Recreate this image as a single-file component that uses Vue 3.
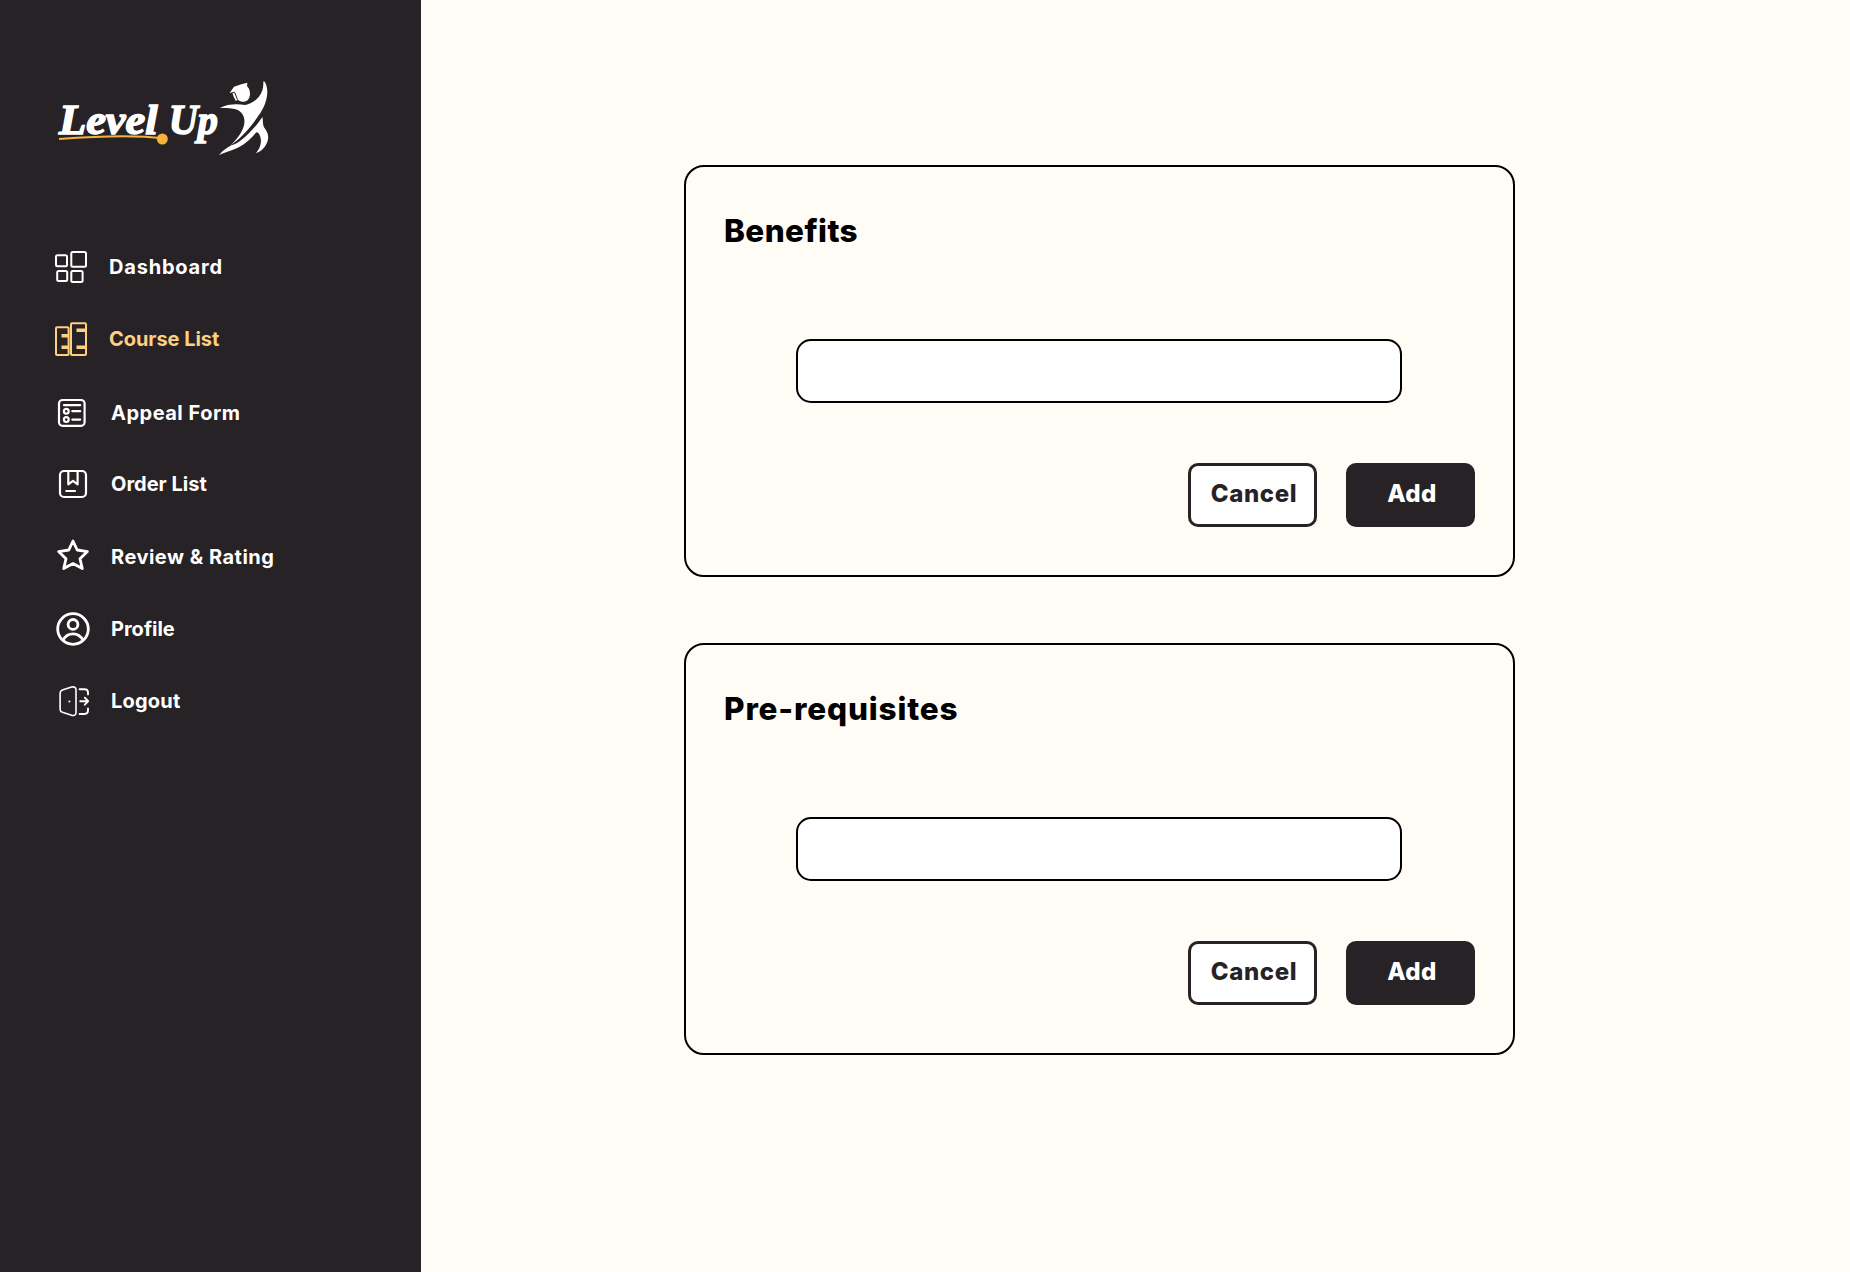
<script setup>
const menu = [
  { id: 'dashboard', label: 'Dashboard' },
  { id: 'courses', label: 'Course List', active: true },
  { id: 'appeal', label: 'Appeal Form' },
  { id: 'orders', label: 'Order List' },
  { id: 'review', label: 'Review & Rating' },
  { id: 'profile', label: 'Profile' },
  { id: 'logout', label: 'Logout' },
]

const sections = [
  { id: 'benefits', title: 'Benefits' },
  { id: 'prerequisites', title: 'Pre-requisites' },
]
</script>

<template>
  <div class="page">
    <aside class="sidebar">
      <svg class="logo" viewBox="0 0 750 360" role="img" aria-label="Level Up">
        <g class="wordmark">
          <text x="57" y="223" textLength="296" lengthAdjust="spacingAndGlyphs">Level</text>
          <text x="386" y="223" textLength="148" lengthAdjust="spacingAndGlyphs">Up</text>
        </g>
        <path class="swoosh" d="M57 237C150 230 270 222 367 235" />
        <circle class="ball" cx="367" cy="237" r="16.5" />
        <g class="figure">
          <path d="M569 99L582 80L604 73L622 68L621 78L627 86C632 98 631 111 624 119C616 127 600 128 592 118L588 124L581 110L577 99Z" />
          <path d="M540 144C562 132 590 131 615 135C640 131 660 113 667 91C671 80 669 70 671 62C682 72 684 94 680 113C675 138 664 155 652 172C640 189 630 202 620 213C605 230 590 243 572 256C588 240 606 220 612 196C618 167 603 149 580 146C564 144 552 145 540 144Z" />
          <path d="M537 285C551 270 562 262 574 256C596 250 614 232 628 218C644 202 656 188 667 171C670 181 667 192 672 202C683 216 688 229 682 245C676 262 663 275 648 279C661 263 667 245 660 228C657 219 653 217 649 217C634 235 616 251 596 262C576 273 557 276 537 285Z" />
          <path class="tassel" d="M573 99L584 97L592 118" />
        </g>
      </svg>

      <nav class="menu">
        <a v-for="item in menu" :key="item.id" :class="['item', item.id, { active: item.active }]">
          <svg class="icon" viewBox="0 0 40 40">
            <g v-if="item.id === 'dashboard'" stroke-width="2">
              <rect x="4" y="8.2" width="11" height="11" rx="1.5" />
              <rect x="19.3" y="5" width="14.7" height="14.7" rx="1.5" />
              <rect x="5.2" y="24" width="10" height="10" rx="1.5" />
              <rect x="19.3" y="24" width="11.3" height="11" rx="1.5" />
            </g>
            <g v-else-if="item.id === 'courses'" stroke-width="2">
              <rect x="4" y="8.2" width="12.6" height="27.8" rx="1" />
              <rect x="19" y="4.2" width="15" height="31.8" rx="1" />
              <path stroke-width="3.4" d="M9.5 16.8H16M9.5 28.2H16M24.5 11.3H34M24.5 28.2H34" />
            </g>
            <g v-else-if="item.id === 'appeal'" stroke-width="2.2">
              <rect x="7" y="7" width="25.6" height="25.8" rx="3.6" />
              <path stroke-linecap="round" d="M12 12.2H28.2M20.3 18.2H28.2M20.3 26.6H28.2" />
              <circle cx="14.3" cy="18.2" r="2.4" />
              <circle cx="14.3" cy="26.6" r="2.4" />
            </g>
            <g v-else-if="item.id === 'orders'" stroke-width="2.2" stroke-linecap="round" stroke-linejoin="round">
              <rect x="8" y="7" width="26" height="26" rx="4" />
              <path d="M16.3 7V20.3L21 16.8L25.6 20.3V7M14.3 27H23" />
            </g>
            <g v-else-if="item.id === 'review'" stroke-width="2.8" stroke-linejoin="round">
              <path d="M21 4L25.2 13L35.4 14.6L28 21.7L30.3 31.6L21 26.6L11.7 31.6L14 21.7L6.6 14.6L16.8 13Z" />
            </g>
            <g v-else-if="item.id === 'profile'" stroke-width="2.8">
              <circle cx="21" cy="20" r="15.3" />
              <circle cx="21" cy="15.4" r="4.9" />
              <path d="M10.8 31.4C15.5 22.6 26.5 22.6 31.2 31.4" />
            </g>
            <g v-else stroke-width="1.9" stroke-linecap="round" stroke-linejoin="round">
              <path stroke-width="1.6" d="M8.1 12.2C8.1 10.6 8.8 9.7 10.4 9.1L19.6 6.1C22 5.3 24 6.4 24 8.8V31.6C24 34 22 35.1 19.6 34.3L10.4 31.3C8.8 30.7 8.1 29.8 8.1 28.2Z" />
              <path d="M27.6 8.2H32.4C34.8 8.2 36 9.3 36 11.6V13.4M27.6 33H32.4C34.8 33 36 31.9 36 29.6V27.4M28.2 20.2H35.8M32.8 16.7L36.2 20.2L32.8 23.7" />
              <circle class="knob" cx="17.4" cy="20.4" r="1" />
            </g>
          </svg>
          <span class="label">{{ item.label }}</span>
        </a>
      </nav>
    </aside>

    <main class="content">
      <section v-for="section in sections" :key="section.id" class="card">
        <h2 :class="['title', section.id]">{{ section.title }}</h2>
        <input class="field" type="text" :aria-label="section.title" />
        <div class="actions">
          <button class="btn cancel" type="button">Cancel</button>
          <button class="btn add" type="button">Add</button>
        </div>
      </section>
    </main>
  </div>
</template>

<style>
body {
  margin: 0;
}
</style>

<style scoped>
.page {
  display: flex;
  min-height: 1272px;
  height: 100vh;
  background: #fffbf5;
  font-family: Inter, 'Liberation Sans', sans-serif;
}

.sidebar {
  box-sizing: border-box;
  width: 421px;
  flex: none;
  padding-top: 60px;
  background: #272226;
  color: #fff;
}

.logo {
  display: block;
  width: 250px;
  height: 120px;
  margin-left: 40px;
}

.wordmark {
  font: italic 700 128px 'Liberation Serif', serif;
  fill: #fff;
  stroke: #fff;
  stroke-width: 4.5;
}

.swoosh {
  fill: none;
  stroke: #f6b23d;
  stroke-width: 6;
}

.ball {
  fill: #f6b23d;
}

.figure {
  fill: #fff;
}

.tassel {
  fill: none;
  stroke: #272226;
  stroke-width: 3;
}

.menu {
  display: flex;
  flex-direction: column;
  padding: 51px 0 0 52px;
}

.item {
  display: flex;
  align-items: center;
  height: 72px;
}

.item.active {
  color: #ffd080;
}

.icon {
  flex: none;
  width: 40px;
  height: 40px;
  margin-right: 19px;
  fill: none;
  stroke: currentColor;
}

.knob {
  fill: currentColor;
  stroke: none;
}

.label {
  font-size: 20px;
  font-weight: 650;
  line-height: 30px;
  white-space: nowrap;
}

.dashboard .icon,
.courses .icon {
  margin-right: 17px;
}

.dashboard .label {
  letter-spacing: 0.8px;
}

.courses .label {
  letter-spacing: -0.05px;
}

.appeal {
  margin-top: 2px;
}

.appeal .label {
  letter-spacing: 0.5px;
}

.orders {
  margin-top: -1px;
}

.orders .label {
  letter-spacing: 0;
}

.review {
  margin-top: 1px;
}

.review .label {
  letter-spacing: 0.5px;
}

.profile .label {
  letter-spacing: 0;
}

.logout .label {
  letter-spacing: 0.2px;
}

.content {
  display: flex;
  flex-direction: column;
  gap: 66px;
  padding: 165px 0 0 263px;
}

.card {
  box-sizing: border-box;
  display: flex;
  flex-direction: column;
  width: 831px;
  height: 412px;
  padding: 44px 38px 0;
  border: 2px solid #000;
  border-radius: 20px;
}

.title {
  margin: 0;
  font-size: 31.5px;
  font-weight: 800;
  line-height: 40px;
  color: #000;
}

.title.benefits {
  letter-spacing: 0.4px;
}

.title.prerequisites {
  letter-spacing: 0.85px;
}

.field {
  box-sizing: border-box;
  width: 606px;
  height: 64px;
  margin: 88px 0 0 72px;
  padding: 0 20px;
  border: 2px solid #000;
  border-radius: 15px;
  background: #fff;
  font: 400 20px Inter, sans-serif;
}

.actions {
  display: flex;
  justify-content: flex-end;
  gap: 29px;
  margin-top: 60px;
}

.btn {
  box-sizing: border-box;
  width: 129px;
  height: 64px;
  padding: 0 0 3px 3px;
  border: 3px solid #272226;
  border-radius: 10px;
  font: 800 24px Inter, sans-serif;
}

.cancel {
  background: #fff;
  color: #272226;
  letter-spacing: 0.65px;
}

.add {
  background: #272226;
  color: #fff;
  letter-spacing: 0.4px;
}
</style>
